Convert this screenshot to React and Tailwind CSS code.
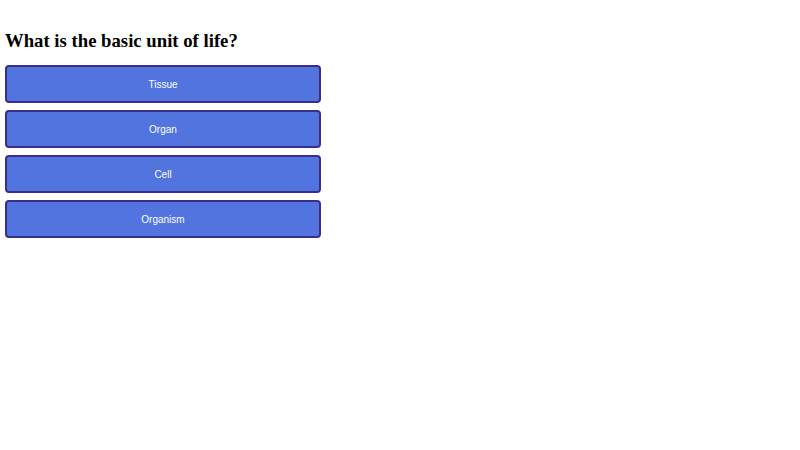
export default function App() {
  const options = ["Tissue", "Organ", "Cell", "Organism"];
  return (
    <div className="w-[800px] h-[450px] bg-white px-[5px] pt-[5px]">
      <h3
        className="text-[18.72px] font-bold text-black mt-[25px] mb-[13px] leading-[22px]"
        style={{ fontFamily: '"Liberation Serif", serif' }}
      >
        What is the basic unit of life?
      </h3>
      <div className="flex flex-col gap-[7px] w-[316px]">
        {options.map((o) => (
          <button
            key={o}
            className="h-[38px] w-full rounded-[4px] border-2 border-[#3a2d8c] bg-[#5174df] text-white text-[10px]"
            style={{ fontFamily: '"Liberation Sans", Arial, sans-serif' }}
          >
            {o}
          </button>
        ))}
      </div>
    </div>
  );
}
